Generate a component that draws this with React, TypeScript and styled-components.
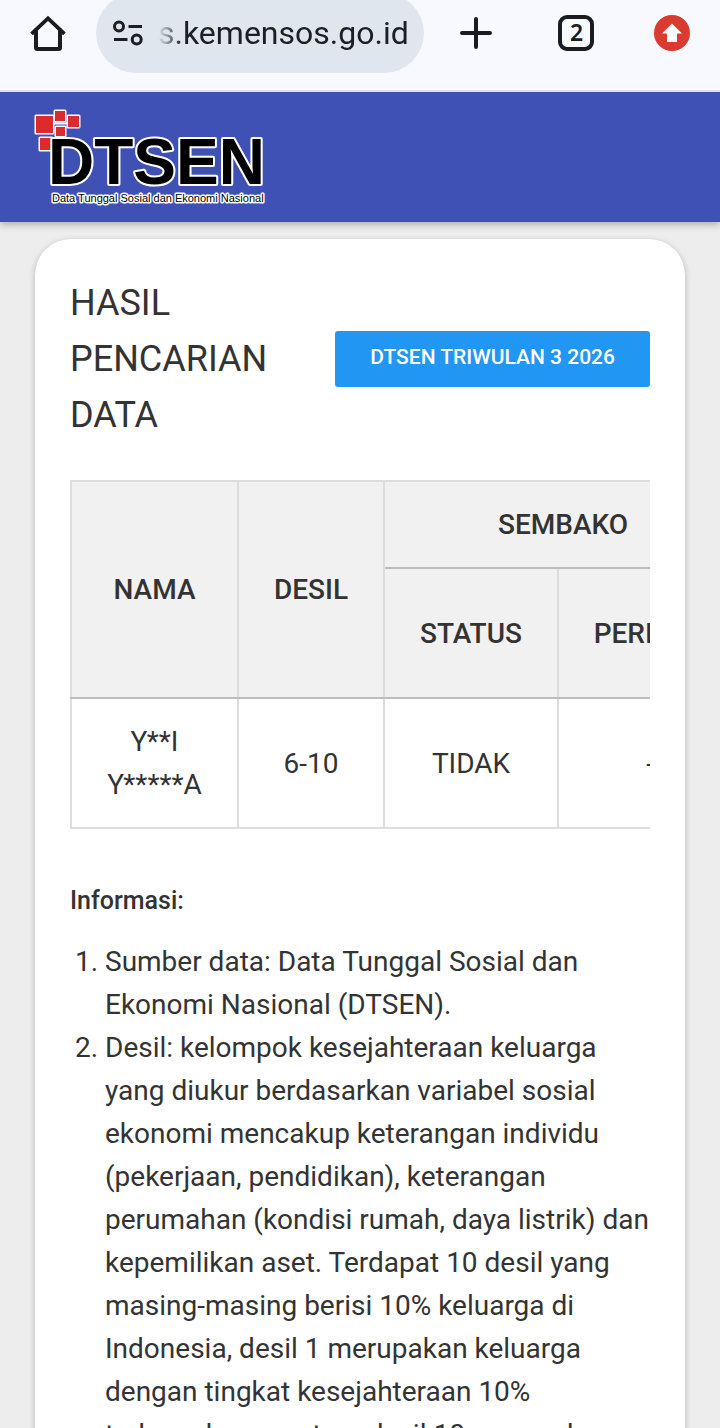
import React from "react";
import styled, { createGlobalStyle } from "styled-components";

const GlobalStyle = createGlobalStyle`
  *, *::before, *::after { box-sizing: border-box; }
  body {
    margin: 0;
    background: #ededed;
    color: #333;
    font-family: Roboto, "Liberation Sans", sans-serif;
  }
`;

const Screen = styled.div`
  display: flex;
  flex-direction: column;
  height: 100vh;
  overflow: hidden;
`;

const Toolbar = styled.header`
  display: flex;
  align-items: center;
  height: 92px;
  padding: 0 28px 24px 30px;
  background: #f8f9ff;
  border-bottom: 2px solid #dbe3f1;
`;

const IconButton = styled.button<{ $width: number }>`
  display: flex;
  flex: none;
  align-items: center;
  justify-content: center;
  width: ${(p) => p.$width}px;
  height: 40px;
  padding: 0;
  border: 0;
  background: none;
  color: #1a1c20;
`;

const AddressPill = styled.div`
  display: flex;
  flex: 1;
  align-items: center;
  gap: 14px;
  min-width: 0;
  height: 80px;
  margin: 0 28px 0 30px;
  padding: 0 12px 0 16px;
  border-radius: 40px;
  background: #dfe6ee;
`;

const AddressInput = styled.input`
  flex: 1;
  min-width: 0;
  height: 48px;
  padding: 0;
  border: 0;
  outline: 0;
  background: none;
  color: #1b1f24;
  font: 400 32px/48px Roboto, sans-serif;
  mask-image: linear-gradient(to right, transparent, #000 24px);
`;

const Actions = styled.div`
  display: flex;
  gap: 48px;
`;

const Page = styled.div`
  flex: 1;
  min-height: 0;
  overflow: hidden auto;
  scrollbar-width: none;
`;

const Navbar = styled.nav`
  height: 130px;
  padding: 16px 32px;
  background: #3f51b5;
  box-shadow: 0 2px 8px rgba(0, 0, 0, 0.3);
`;

const LogoLink = styled.a`
  display: inline-block;
  svg { display: block; }
`;

const Card = styled.main`
  margin: 17px 35px 36px;
  padding: 36px 35px;
  border-radius: 36px;
  background: #fff;
  box-shadow: 0 2px 6px rgba(0, 0, 0, 0.25);
`;

const CardHeader = styled.div`
  display: flex;
  align-items: center;
  justify-content: space-between;
`;

const Title = styled.h1`
  flex: 1;
  margin: 0;
  font-size: 36px;
  font-weight: 400;
  line-height: 56px;
`;

const PeriodButton = styled.button`
  flex: none;
  height: 56px;
  padding: 0 35px 4px;
  border: 0;
  border-radius: 3px;
  background: #2196f3;
  color: #fff;
  font: 500 21px/32px Roboto, sans-serif;
`;

const TableScroller = styled.div`
  margin-top: 37px;
  overflow: auto hidden;
  scrollbar-width: none;
`;

const ResultTable = styled.table`
  width: 673px;
  table-layout: fixed;
  border-collapse: collapse;
  font-size: 28px;
  line-height: 43px;
  text-align: center;
`;

const HeadCell = styled.th`
  padding: 0;
  border: 2px solid #ddd;
  border-bottom-color: #bdbdbd;
  background: #f1f1f1;
  font-weight: 500;
`;

const Cell = styled.td`
  padding: 0 32px;
  border: 2px solid #ddd;
`;

const Row = styled.tr<{ $height: number }>`
  height: ${(p) => p.$height}px;
`;

const InfoTitle = styled.h2`
  margin: 50px 0 18px;
  font-size: 25px;
  font-weight: 500;
  line-height: 43px;
`;

const InfoList = styled.ol`
  margin: 0;
  padding-left: 35px;
  font-size: 28px;
  line-height: 43px;
`;

const HomeIcon = () => (
  <svg width="36" height="36" viewBox="0 0 36 36" fill="none" stroke="currentColor" strokeWidth="4" strokeLinecap="round" strokeLinejoin="round">
    <path d="M2 17.500 18 2.500 34 17.500" strokeLinecap="square" strokeLinejoin="miter" transform="translate(1 1) scale(.944)" />
    <path d="M6 15v17.500a1.500 1.500 0 0 0 1.500 1.500h21a1.500 1.500 0 0 0 1.500-1.500V15" />
  </svg>
);

const TuneIcon = () => (
  <svg width="32" height="28" viewBox="0 0 32 28" fill="none" stroke="#1b1f24" strokeWidth="3">
    <circle cx="7" cy="7.500" r="4.500" />
    <path d="M16.500 7.500h13.500M2 20.500h13.500" />
    <circle cx="24.700" cy="20.500" r="4.500" />
  </svg>
);

const PlusIcon = () => (
  <svg width="32" height="32" viewBox="0 0 32 32" stroke="currentColor" strokeWidth="4" strokeLinecap="round">
    <path d="M16 2v28M2 16h28" />
  </svg>
);

const TabsIcon = () => (
  <svg width="36" height="36" viewBox="0 0 36 36">
    <rect x="2" y="2" width="32" height="32" rx="7" fill="none" stroke="currentColor" strokeWidth="4" />
    <text x="18.500" y="26" textAnchor="middle" fontFamily="Noto Sans, sans-serif" fontWeight="600" fontSize="23" fill="currentColor">2</text>
  </svg>
);

const UpdateIcon = () => (
  <svg width="36" height="36" viewBox="0 0 36 36">
    <circle cx="18" cy="18" r="18" fill="#db3a2f" />
    <path d="M18 8.500 28 18.500h-5V27H13v-8.500H8Z" fill="#fff" />
  </svg>
);

const logoSquares = [
  { x: 4, y: 8, size: 17 },
  { x: 23, y: 3, size: 10 },
  { x: 36, y: 8, size: 11 },
  { x: 24, y: 19, size: 9 },
  { x: 8, y: 30, size: 12 },
];

const Logo = () => (
  <svg width="234" height="98" viewBox="0 0 234 98" role="img" aria-label="DTSEN">
    <path d="M22 15.500h13" stroke="#fff" strokeWidth="2" />
    <g fill="#dd2a2b" stroke="#fff" strokeWidth="3" paintOrder="stroke" strokeLinejoin="round">
      {logoSquares.map((s) => (
        <rect key={`${s.x}-${s.y}`} x={s.x} y={s.y} width={s.size} height={s.size} />
      ))}
    </g>
    <g fill="#000" stroke="#fff" paintOrder="stroke" strokeLinejoin="round" fontFamily="Liberation Sans, sans-serif">
      <text x="16" y="76" fontSize="64" fontWeight="700" strokeWidth="4">DTSEN</text>
      <text x="20" y="94" fontSize="11" strokeWidth="3">Data Tunggal Sosial dan Ekonomi Nasional</text>
    </g>
  </svg>
);

export default function App() {
  return (
    <Screen>
      <GlobalStyle />
      <Toolbar>
        <IconButton $width={36} aria-label="Beranda"><HomeIcon /></IconButton>
        <AddressPill>
          <TuneIcon />
          <AddressInput type="text" aria-label="Alamat situs" defaultValue="s.kemensos.go.id" />
        </AddressPill>
        <Actions>
          <IconButton $width={48} aria-label="Tab baru"><PlusIcon /></IconButton>
          <IconButton $width={56} aria-label="Daftar tab"><TabsIcon /></IconButton>
          <IconButton $width={40} aria-label="Pembaruan"><UpdateIcon /></IconButton>
        </Actions>
      </Toolbar>
      <Page>
        <Navbar>
          <LogoLink href="#"><Logo /></LogoLink>
        </Navbar>
        <Card>
          <CardHeader>
            <Title>HASIL PENCARIAN DATA</Title>
            <PeriodButton>DTSEN TRIWULAN 3 2026</PeriodButton>
          </CardHeader>
          <TableScroller>
            <ResultTable>
              <colgroup>
                <col style={{ width: 167 }} />
                <col style={{ width: 146 }} />
                <col style={{ width: 174 }} />
                <col style={{ width: 184 }} />
              </colgroup>
              <thead>
                <Row $height={87}>
                  <HeadCell rowSpan={2}>NAMA</HeadCell>
                  <HeadCell rowSpan={2}>DESIL</HeadCell>
                  <HeadCell colSpan={2}>SEMBAKO</HeadCell>
                </Row>
                <Row $height={130}>
                  <HeadCell>STATUS</HeadCell>
                  <HeadCell>PERIODE</HeadCell>
                </Row>
              </thead>
              <tbody>
                <Row $height={130}>
                  <Cell>Y**I Y*****A</Cell>
                  <Cell>6-10</Cell>
                  <Cell>TIDAK</Cell>
                  <Cell>-</Cell>
                </Row>
              </tbody>
            </ResultTable>
          </TableScroller>
          <InfoTitle>Informasi:</InfoTitle>
          <InfoList>
            <li>Sumber data: Data Tunggal Sosial dan Ekonomi Nasional (DTSEN).</li>
            <li>
              Desil: kelompok kesejahteraan keluarga yang diukur berdasarkan variabel sosial
              ekonomi mencakup keterangan individu (pekerjaan, pendidikan), keterangan
              perumahan (kondisi rumah, daya listrik) dan kepemilikan aset. Terdapat 10 desil
              yang masing-masing berisi 10% keluarga di Indonesia, desil 1 merupakan keluarga
              dengan tingkat kesejahteraan 10% terbawah sementara desil 10 merupakan
            </li>
          </InfoList>
        </Card>
      </Page>
    </Screen>
  );
}
